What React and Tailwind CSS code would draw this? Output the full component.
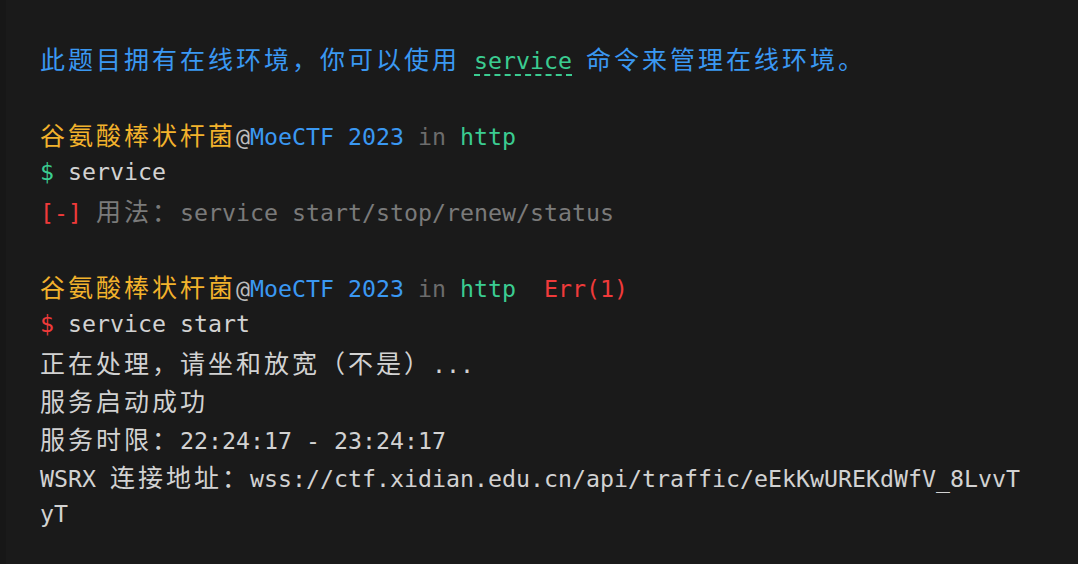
const CJK = /([\u3000-\u303f\u4e00-\u9fff\uff00-\uffef]+)/;

// CJK glyphs take two terminal cells (28px), latin one cell (14px)
function T({ children, className = "" }) {
  const parts = String(children).split(CJK);
  return (
    <span className={className}>
      {parts.map((p, i) =>
        i % 2 === 1 ? (
          <span
            key={i}
            className="font-['Noto_Sans_CJK_SC',sans-serif] text-[25px] tracking-[3px]"
          >
            {p}
          </span>
        ) : (
          p
        )
      )}
    </span>
  );
}

function Line({ children }) {
  return (
    <div className="h-[38px] leading-[38px] whitespace-pre overflow-visible">
      {children}
    </div>
  );
}

function Prompt({ err }) {
  return (
    <Line>
      <T className="text-[#f2b22c]">谷氨酸棒状杆菌</T>
      <span className="text-[#bdbdbd]">@</span>
      <span className="text-[#3a98f2]">MoeCTF 2023</span>
      <span className="text-[#6c6c6c]"> in </span>
      <span className="text-[#3bcc91]">http</span>
      {err && <span className="text-[#f03a3a]">  Err(1)</span>}
    </Line>
  );
}

export default function App() {
  return (
    <div className="w-[1078px] h-[564px] bg-[#1a1a1a] flex">
      <div className="w-[6px] bg-[#171717]" />
      <div className="pl-[34px] pt-[39px] text-[23.25px] text-[#d2d2d2] font-['DejaVu_Sans_Mono','Noto_Sans_CJK_SC',monospace]">
        <Line>
          <T className="text-[#3a98f2]">此题目拥有在线环境，你可以使用</T>
          <span className="text-[#3a98f2]"> </span>
          <span className="text-[#3bcc91] underline decoration-dashed decoration-[#3bcc91] decoration-[1.5px] underline-offset-[5px]">
            service
          </span>
          <span className="text-[#3a98f2]"> </span>
          <T className="text-[#3a98f2]">命令来管理在线环境。</T>
        </Line>
        <Line> </Line>
        <Prompt />
        <Line>
          <span className="text-[#3bcc91]">$</span> service
        </Line>
        <Line>
          <span className="text-[#f03a3a]">[-]</span>{" "}
          <T className="text-[#7a7a7a]">用法：service start/stop/renew/status</T>
        </Line>
        <Line> </Line>
        <Prompt err />
        <Line>
          <span className="text-[#f03a3a]">$</span> service start
        </Line>
        <Line>
          <T>正在处理，请坐和放宽（不是）...</T>
        </Line>
        <Line>
          <T>服务启动成功</T>
        </Line>
        <Line>
          <T>服务时限：22:24:17 - 23:24:17</T>
        </Line>
        <Line>
          <T>WSRX 连接地址：wss://ctf.xidian.edu.cn/api/traffic/eEkKwUREKdWfV_8LvvT</T>
        </Line>
        <Line>yT</Line>
      </div>
    </div>
  );
}
